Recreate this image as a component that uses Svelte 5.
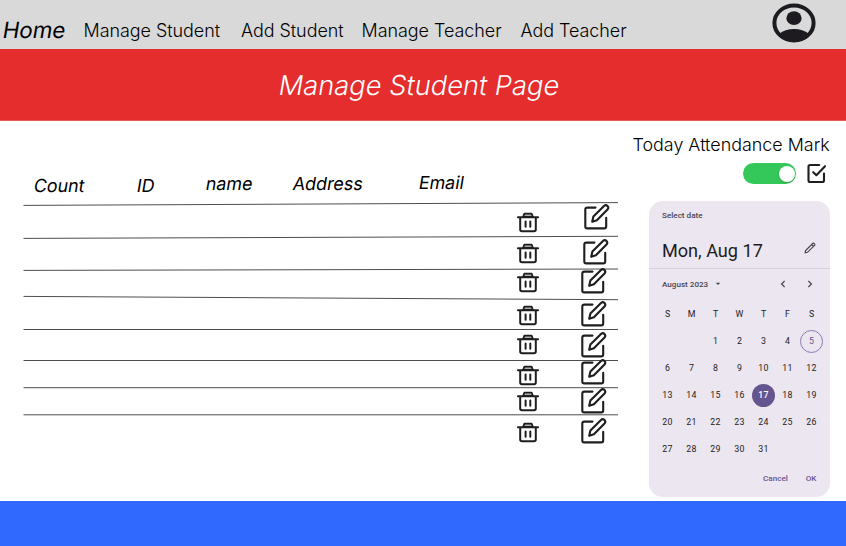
<script>
  const nav = [
    { label: 'Manage Student', left: 18 },
    { label: 'Add Student', left: 21 },
    { label: 'Manage Teacher', left: 18 },
    { label: 'Add Teacher', left: 19 }
  ];

  const columns = [
    { label: 'Count', x: 34, drop: 2 },
    { label: 'ID', x: 137, drop: 2 },
    { label: 'name', x: 206, drop: -0.5 },
    { label: 'Address', x: 293, drop: 0 },
    { label: 'Email', x: 418.5, drop: -1 }
  ];

  // from/to: height of the rule at its two ends; trash/edit: drop of each icon below the rule
  const rows = [
    { height: 33, from: 0.4, to: -2.4, trash: 6.5, editX: 584.3, edit: -0.7 },
    { height: 32, from: 0.4, to: -1.7, trash: 5.1, editX: 583.3, edit: 1.3 },
    { height: 27, from: 0.4, to: -1, trash: 2.1, editX: 581, edit: -1.8 },
    { height: 32, from: -0.6, to: 2.7, trash: 7.9, editX: 581, edit: 4.1 },
    { height: 31, from: 0.5, to: 0.5, trash: 5, editX: 581, edit: 3.1 },
    { height: 28, from: 0.5, to: 0.5, trash: 4.6, editX: 581, edit: -1.5 },
    { height: 27, from: -0.3, to: -0.3, trash: 3.3, editX: 581, edit: -0.5 },
    { height: 32, from: -0.2, to: -0.2, trash: 7.4, editX: 581, edit: 3.2 }
  ];

  const weekdays = ['S', 'M', 'T', 'W', 'T', 'F', 'S'];
  const days = [null, null, ...Array.from({ length: 31 }, (_, i) => i + 1)];
</script>

<div class="page">
  <header>
    <nav>
      <a class="home slant" href="#home">Home</a>
      {#each nav as item}
        <a href="#page" style="margin-left: {item.left}px">{item.label}</a>
      {/each}
    </nav>
    <svg class="avatar" width="44" height="40" viewBox="0 0 44 40">
      <clipPath id="face"><ellipse cx="22" cy="20" rx="21" ry="19" /></clipPath>
      <ellipse cx="22" cy="20" rx="19.6" ry="17.5" fill="none" stroke="#1d1b20" stroke-width="4" />
      <ellipse cx="22" cy="15.2" rx="7.6" ry="6.9" fill="#1d1b20" />
      <path d="M7 31Q13 26 22 26T37 31L34 40H10Z" fill="#1d1b20" clip-path="url(#face)" />
    </svg>
  </header>

  <h1><span class="slant">Manage Student Page</span></h1>

  <main>
    <section class="table">
      <div class="head">
        {#each columns as c, i}
          <div class="cell" style="width: {(columns[i + 1]?.x ?? 600) - c.x}px; padding-top: {c.drop + 1}px"><span class="slant">{c.label}</span></div>
        {/each}
      </div>
      {#each rows as r}
        <div class="row" style="height: {r.height}px">
          <svg class="rule" width="596" height="10" viewBox="0 -5 596 10">
            <line x1="0.5" y1={r.from} x2="595" y2={r.to} stroke="#000" stroke-width="0.7" />
          </svg>
          <svg class="trash" width="22" height="21" viewBox="0 0 22 21" style="margin-top: {r.trash}px">
            <path d="M6 5L7.4 1.6H14.6L16 5Z" fill="#aaa" stroke="#1e1e1e" stroke-width="1.8" stroke-linejoin="round" />
            <path d="M.9 5.2H21.1M3.2 5.2V17.6Q3.2 19.3 5 19.3H17Q18.8 19.3 18.8 17.6V5.2M8.6 9.5V14.8M13.3 9.5V14.8" fill="none" stroke="#1e1e1e" stroke-width="2" stroke-linecap="round" />
          </svg>
          <svg class="edit" width="26" height="26" viewBox="0 0 26 26" style="margin-top: {r.edit}px; margin-left: {r.editX - 539}px">
            <path d="M11.5 3.6H3.3Q1.3 3.6 1.3 5.6V22.4Q1.3 24.4 3.3 24.4H20.2Q22.2 24.4 22.2 22.4V13.7" />
            <path d="M8.2 17.8L9.4 12.6L20 2Q21.8.4 23.5 2Q25.1 3.8 23.5 5.5L12.9 16.3Z" />
          </svg>
        </div>
      {/each}
    </section>

    <aside>
      <div class="mark">Today Attendance Mark</div>
      <div class="controls">
        <div class="toggle"><span></span></div>
        <svg width="20" height="21" viewBox="0 0 20 21" fill="none" stroke="#1e1e1e" stroke-width="2.1" stroke-linecap="round" stroke-linejoin="round">
          <path d="M12.2 2H3.3Q1.5 2 1.5 3.8V17.2Q1.5 19 3.3 19H15.2Q17 19 17 17.2V10.6M6.2 9.2L9.4 12.2L18 3.2" />
        </svg>
      </div>

      <div class="calendar">
        <div class="caption">Select date</div>
        <div class="date">
          <span>Mon, Aug 17</span>
          <svg width="12" height="12" viewBox="0 0 12 12" fill="none" stroke="#49454f" stroke-width="1.2">
            <path d="M1.2 10.8L1.6 8.5L8.9 1.3Q9.4.9 9.9 1.3L10.7 2.1Q11.1 2.6 10.7 3.1L3.5 10.3ZM7.6 2.6L9.4 4.4" />
          </svg>
        </div>
        <div class="month">
          <span>August 2023</span>
          <svg class="caret" width="6" height="4" viewBox="0 0 6 4"><path d="M.8.7H5.2L3 3Z" fill="#49454f" /></svg>
          <svg class="prev" width="6" height="8" viewBox="0 0 6 8"><path d="M4.6 1L1.6 4L4.6 7" /></svg>
          <svg class="next" width="6" height="8" viewBox="0 0 6 8"><path d="M1.4 1L4.4 4L1.4 7" /></svg>
        </div>
        <div class="grid">
          {#each weekdays as d}<div class="weekday">{d}</div>{/each}
          {#each days as d}
            <div><span class:today={d === 5} class:selected={d === 17}>{d ?? ''}</span></div>
          {/each}
        </div>
        <div class="actions"><span>Cancel</span><span>OK</span></div>
      </div>
    </aside>
  </main>
  <footer></footer>
</div>

<style>
  :global(body) { margin: 0; }
  * { box-sizing: border-box; }
  svg { display: block; flex: none; }
  .page { width: 846px; height: 546px; background: #fff; display: flex; flex-direction: column; overflow: hidden; font-family: Inter, sans-serif; color: #000; }
  .slant { display: inline-block; transform: skewX(-9.4deg); }
  header { height: 49px; flex: none; background: #d9d9d9; display: flex; justify-content: space-between; padding: 3px 30px 0 3px; }
  nav { display: flex; align-items: flex-start; height: 46px; padding-top: 13px; }
  a { color: #000; text-decoration: none; margin-top: 2px; font-size: 17.95px; line-height: 26px; font-weight: 300; white-space: nowrap; letter-spacing: -.04px; }
  .home { margin-top: 0; font-size: 22.4px; font-weight: 400; line-height: 28px; }
  h1 { margin: 0; height: 72px; flex: none; background: #e52d2d; color: #fff; font-size: 27.3px; font-weight: 350; line-height: 73px; text-align: center; padding-right: 8px; border-bottom: 1px solid #ea5a5a; }
  main { height: 380px; flex: none; display: flex; }
  .table { width: 625px; padding-top: 51px; }
  .head { display: flex; height: 33px; padding-left: 34px; }
  .cell { flex: none; font-size: 17.9px; line-height: 21px; font-weight: 400; }
  .row { display: flex; align-items: flex-start; padding-left: 23px; }
  .rule { margin-top: -5px; margin-right: -102px; }
  .edit { fill: none; stroke: #1e1e1e; stroke-width: 2.1; stroke-linejoin: round; stroke-linecap: round; }
  aside { width: 221px; padding-top: 13px; }
  .mark { font-size: 17.9px; line-height: 22px; font-weight: 300; white-space: nowrap; padding-left: 7.5px; }
  .controls { display: flex; align-items: center; margin: 7px 0 0 118px; gap: 11px; }
  .toggle { width: 53px; height: 21px; border-radius: 11px; background: #34c759; padding: 2.5px 1px; display: flex; justify-content: flex-end; }
  .toggle span { width: 16px; height: 16px; border-radius: 50%; background: #fff; box-shadow: 0 1px 2px #0003; }
  .calendar { margin: 17px 0 0 24px; width: 181px; height: 296px; border-radius: 14px; background: #ece6f0; font-family: Roboto, sans-serif; color: #1d1b20; }
  .caption { padding: 8px 0 0 13px; font-size: 8.1px; line-height: 12px; font-weight: 500; color: #49454f; }
  .date { height: 48px; border-bottom: 1px solid #d8d0dd; display: flex; justify-content: space-between; padding: 19px 14px 0 13px; font-size: 18.1px; line-height: 22px; }
  .date svg { margin-top: 2px; }
  .month { display: flex; align-items: center; height: 31px; padding: 0 17px 1px 13px; font-size: 8.1px; font-weight: 500; color: #49454f; }
  .month path { fill: none; stroke: #49454f; stroke-width: 1.2; }
  .caret { margin-left: 7px; }
  .month .caret path { fill: #49454f; stroke: none; }
  .prev { margin-left: auto; margin-right: 21px; }
  .grid { display: grid; grid-template-columns: repeat(7, 24px); grid-template-rows: 28px; grid-auto-rows: 27px; padding-left: 6.5px; font-size: 8.8px; }
  .grid div { display: flex; align-items: center; justify-content: center; }
  .grid .weekday { padding-bottom: 1px; }
  .grid span { width: 23px; height: 23px; line-height: 23px; text-align: center; border-radius: 50%; flex: none; letter-spacing: .2px; }
  .grid .today { border: 1px solid #8b7cb0; color: #65558f; line-height: 21px; }
  .grid .selected { background: #65558f; color: #fff; font-weight: 500; }
  .actions { display: flex; justify-content: flex-end; gap: 18px; padding: 9px 13.5px 0 0; font-size: 8.1px; line-height: 12px; font-weight: 500; color: #65558f; }
  footer { flex: 1; background: #3069fe; }
</style>
